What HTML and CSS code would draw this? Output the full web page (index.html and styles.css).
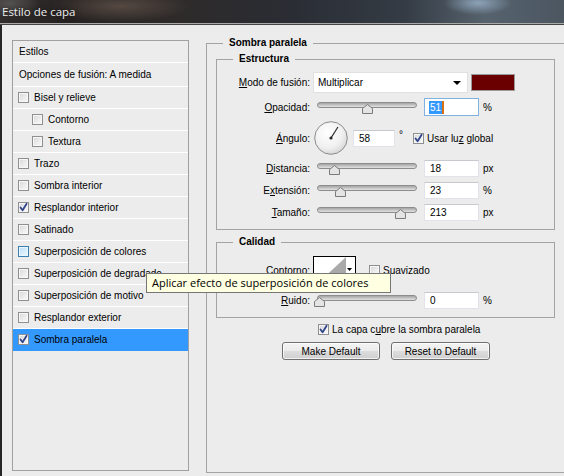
FILE: index.html
```html
<!DOCTYPE html>
<html lang="es">
<head>
<meta charset="utf-8">
<title>Estilo de capa</title>
<link rel="stylesheet" href="styles.css">
</head>
<body>
<div class="titlebar"><span class="title">Estilo de capa</span></div>
<div class="window">
  <div class="styles-list">
    <div class="row head first">Estilos</div>
    <div class="row head second">Opciones de fusión: A medida</div>
    <div class="row"><span class="cb"></span>Bisel y relieve</div>
    <div class="row sub"><span class="cb"></span>Contorno</div>
    <div class="row sub"><span class="cb"></span>Textura</div>
    <div class="row"><span class="cb"></span>Trazo</div>
    <div class="row"><span class="cb"></span>Sombra interior</div>
    <div class="row"><span class="cb checked"><svg viewBox="0 0 11 11"><path d="M2.5 5.5 L4.6 8.3 L8.6 1.8" /></svg></span>Resplandor interior</div>
    <div class="row"><span class="cb"></span>Satinado</div>
    <div class="row"><span class="cb hover"></span>Superposición de colores</div>
    <div class="row"><span class="cb"></span>Superposición de degradado</div>
    <div class="row"><span class="cb"></span>Superposición de motivo</div>
    <div class="row"><span class="cb"></span>Resplandor exterior</div>
    <div class="row selected"><span class="cb checked"><svg viewBox="0 0 11 11"><path d="M2.5 5.5 L4.6 8.3 L8.6 1.8" /></svg></span>Sombra paralela</div>
  </div>

  <section class="outer">
    <div class="outer-head"><span class="seg"></span><h2 class="outer-title">Sombra paralela</h2><span class="line"></span></div>
    <div class="outer-body">

    <fieldset class="group estructura">
      <legend>Estructura</legend>
      <div class="form">
        <div class="frow h21">
          <span class="lbl"><u>M</u>odo de fusión:</span>
          <div class="select">Multiplicar<span class="arrow"></span></div>
          <span class="swatch"></span>
        </div>
        <div class="frow h18">
          <span class="lbl"><u>O</u>pacidad:</span>
          <div class="slider"><div class="track"></div><svg class="thumb" style="left:45px" viewBox="0 0 11 10"><polygon points="0.5,4.5 5.5,0.5 10.5,4.5 10.5,9.5 0.5,9.5"/></svg></div>
          <div class="textbox focus"><span class="selt">51</span><span class="caret"></span></div>
          <span class="unit">%</span>
        </div>
        <div class="frow h34">
          <span class="lbl"><u>Á</u>ngulo:</span>
          <svg class="dial" viewBox="0 0 34 34">
            <defs>
              <radialGradient id="dg" cx="40%" cy="35%" r="75%">
                <stop offset="0" stop-color="#ffffff"/>
                <stop offset="0.6" stop-color="#f0f0f0"/>
                <stop offset="1" stop-color="#cfcfcf"/>
              </radialGradient>
            </defs>
            <circle cx="17" cy="17" r="16.3" fill="url(#dg)" stroke="#8c8c8c" stroke-width="1"/>
            <line x1="17" y1="17" x2="23.9" y2="6" stroke="#2b2b2b" stroke-width="1.2"/>
            <circle cx="17" cy="17" r="1.6" fill="#2b2b2b"/>
          </svg>
          <div class="textbox short">58</div>
          <span class="deg">°</span>
          <span class="cb checked ml"><svg viewBox="0 0 11 11"><path d="M2.5 5.5 L4.6 8.3 L8.6 1.8" /></svg></span><span class="cbtext">Usar lu<u>z</u> global</span>
        </div>
        <div class="frow h17">
          <span class="lbl"><u>D</u>istancia:</span>
          <div class="slider"><div class="track"></div><svg class="thumb" style="left:12px" viewBox="0 0 11 10"><polygon points="0.5,4.5 5.5,0.5 10.5,4.5 10.5,9.5 0.5,9.5"/></svg></div>
          <div class="textbox">18</div>
          <span class="unit">px</span>
        </div>
        <div class="frow h17">
          <span class="lbl">E<u>x</u>tensión:</span>
          <div class="slider"><div class="track"></div><svg class="thumb" style="left:18px" viewBox="0 0 11 10"><polygon points="0.5,4.5 5.5,0.5 10.5,4.5 10.5,9.5 0.5,9.5"/></svg></div>
          <div class="textbox">23</div>
          <span class="unit">%</span>
        </div>
        <div class="frow h17">
          <span class="lbl"><u>T</u>amaño:</span>
          <div class="slider"><div class="track"></div><svg class="thumb" style="left:78px" viewBox="0 0 11 10"><polygon points="0.5,4.5 5.5,0.5 10.5,4.5 10.5,9.5 0.5,9.5"/></svg></div>
          <div class="textbox">213</div>
          <span class="unit">px</span>
        </div>
      </div>
    </fieldset>

    <fieldset class="group calidad">
      <legend>Calidad</legend>
      <div class="form q">
        <div class="frow h28">
          <span class="lbl">Contorno:</span>
          <svg class="contour" viewBox="0 0 43 28">
            <rect x="0.5" y="0.5" width="42" height="27" fill="#ffffff" stroke="#000000"/>
            <polygon points="5,27 33,1 33,27" fill="#a9a9a9"/>
            <polygon points="34,12 39,12 36.5,15" fill="#000000"/>
          </svg>
          <span class="cb ml2"></span><span class="cbtext"><u>S</u>uavizado</span>
        </div>
        <div class="frow h17">
          <span class="lbl"><u>R</u>uido:</span>
          <div class="slider"><div class="track"></div><svg class="thumb" style="left:-3px" viewBox="0 0 11 10"><polygon points="0.5,4.5 5.5,0.5 10.5,4.5 10.5,9.5 0.5,9.5"/></svg></div>
          <div class="textbox">0</div>
          <span class="unit">%</span>
        </div>
      </div>
    </fieldset>

    <div class="cover-row">
      <span class="cb checked"><svg viewBox="0 0 11 11"><path d="M2.5 5.5 L4.6 8.3 L8.6 1.8" /></svg></span><span class="cbtext">La capa c<u>u</u>bre la sombra paralela</span>
    </div>
    <div class="buttons">
      <div class="btn w1">Make Default</div>
      <div class="btn w2">Reset to Default</div>
    </div>
    </div>
  </section>
</div>

<div class="tooltip">Aplicar efecto de superposición de colores</div>
</body>
</html>
```

FILE: styles.css
```css
html, body {
  margin: 0;
  padding: 0;
}
body {
  width: 564px;
  height: 476px;
  overflow: hidden;
  position: relative;
  background: #ececec;
  font-family: "Liberation Sans", Arial, sans-serif;
  font-size: 10px;
  color: #000;
}

/* ---------- title bar ---------- */
.titlebar {
  height: 23px;
  border-bottom: 1px solid #a9a9a9;
  box-shadow: 0 1px 0 #454545;
  background:
    radial-gradient(ellipse 34px 12px at 478px 3px, rgba(160,185,210,0.75), rgba(160,185,210,0) 100%),
    radial-gradient(ellipse 70px 16px at 120px 6px, rgba(120,100,88,0.55), rgba(120,100,88,0) 100%),
    radial-gradient(ellipse 30px 14px at 10px 4px, rgba(110,110,110,0.6), rgba(110,110,110,0) 100%),
    linear-gradient(90deg, #34302e 0%, #272322 12%, #2e2a29 30%, #2a2d34 52%, #353c45 72%, #56626d 86%, #4b5661 100%);
  display: flex;
  align-items: center;
}
.title {
  font-family: "Open Sans", "Noto Sans", sans-serif;
  font-size: 11.5px;
  color: #ececec;
  padding-left: 2px;
  text-shadow: 0 0 6px rgba(0,0,0,0.6);
}

/* ---------- window body ---------- */
.window {
  margin-top: 1px;
  height: 451px;
  border-left: 2px solid #262626;
  padding-left: 10px;
  display: flex;
  align-items: flex-start;
}

/* ---------- styles list ---------- */
.styles-list {
  box-sizing: border-box;
  width: 177px;
  height: 431px;
  margin-top: 15px;
  border: 1px solid #a0a0a0;
  background: #ececec;
  flex: none;
}
.row {
  box-sizing: border-box;
  height: 22px;
  border-bottom: 1px solid #ffffff;
  display: flex;
  align-items: center;
  padding-left: 5px;
  white-space: nowrap;
}
.row.head { padding-left: 6px; }
.row.second { height: 24px; }
.row.sub { padding-left: 19px; }
.row.selected {
  background: #3399ff;
  border-bottom-color: transparent;
}
.row .cb { margin-right: 5px; }

/* ---------- checkbox ---------- */
.cb {
  box-sizing: border-box;
  width: 11px;
  height: 11px;
  flex: none;
  border: 1px solid #8e8f8f;
  background: linear-gradient(135deg, #d6d6d6 0%, #ececec 55%, #fafafa 100%);
  box-shadow: inset 0 0 0 1px #f7f7f7;
  display: inline-flex;
  align-items: center;
  justify-content: center;
}
.cb.hover {
  border-color: #3c7fb1;
  background: linear-gradient(135deg, #b9def6 0%, #d8eefb 55%, #eef8fe 100%);
  box-shadow: inset 0 0 0 1px #e9f6fe;
}
.cb svg {
  width: 11px;
  height: 11px;
  flex: none;
}
.cb svg path {
  fill: none;
  stroke: #30458c;
  stroke-width: 1.8;
  stroke-linecap: round;
  stroke-linejoin: round;
}
.cbtext { margin-left: 3px; white-space: nowrap; }

/* ---------- outer group (open on the right, runs past the frame) ---------- */
.outer {
  flex: none;
  width: 420px;
  margin-left: 17px;
  margin-top: 11px;
}
.outer-head {
  display: flex;
  height: 14px;
}
.outer-head .seg {
  align-self: flex-end;
  width: 17px;
  height: 7px;
  border-top: 1px solid #a3a3a3;
  border-left: 1px solid #a3a3a3;
  box-sizing: border-box;
}
.outer-head .line {
  align-self: flex-end;
  flex: 1;
  height: 7px;
  border-top: 1px solid #a3a3a3;
  box-sizing: border-box;
}
.outer-title {
  margin: 0;
  padding: 0 6px;
  line-height: 14px;
  font-size: 10px;
  font-weight: bold;
}
.outer-body {
  border-left: 1px solid #a3a3a3;
  border-bottom: 1px solid #a3a3a3;
  padding: 2px 0 112px 9px;
}

/* ---------- fieldsets ---------- */
fieldset.group {
  margin: 0;
  padding: 0;
  min-width: 0;
  border: 1px solid #a3a3a3;
  box-sizing: border-box;
}
fieldset.group > legend {
  margin-left: 16px;
  padding: 0 6px;
  height: 14px;
  line-height: 14px;
  font-weight: bold;
  font-size: 10px;
}
fieldset.estructura {
  width: 339px;
}
fieldset.calidad {
  width: 339px;
  margin-top: 5px;
}
.form {
  display: flex;
  flex-direction: column;
  gap: 5px;
  padding: 6px 0 8px 0;
}
.form.q {
  gap: 8px;
  padding: 7px 0 8px 0;
}
.frow {
  display: flex;
  align-items: center;
  white-space: nowrap;
}
.h21 { height: 21px; }
.h18 { height: 18px; }
.h17 { height: 17px; }
.h34 { height: 34px; }
.h28 { height: 28px; }
.lbl {
  width: 93px;
  text-align: right;
  margin-right: 3px;
  flex: none;
}

/* select */
.select {
  box-sizing: border-box;
  width: 155px;
  height: 21px;
  background: #fff;
  border: 1px solid #e1e1e1;
  display: flex;
  align-items: center;
  padding-left: 4px;
}
.select .arrow {
  margin-left: auto;
  margin-right: 6px;
  width: 0;
  height: 0;
  border-left: 4px solid transparent;
  border-right: 4px solid transparent;
  border-top: 4px solid #000;
}
.swatch {
  box-sizing: border-box;
  width: 44px;
  height: 17px;
  margin-left: 3px;
  border: 1px solid #9a9a9a;
  background: #6a0000;
}

/* slider */
.slider {
  position: relative;
  width: 100px;
  height: 17px;
  margin-left: 4px;
  flex: none;
}
.track {
  box-sizing: border-box;
  margin-top: 3px;
  height: 6px;
  border: 1px solid #8d8d8d;
  border-radius: 3px;
  background: linear-gradient(#a5a5a5, #cacaca 60%, #e2e2e2);
}
.thumb {
  position: absolute;
  top: 5px;
  width: 11px;
  height: 10px;
}
.thumb polygon {
  fill: #e4e4e4;
  stroke: #7b7b7b;
  stroke-width: 1;
}

/* text boxes */
.textbox {
  box-sizing: border-box;
  width: 55px;
  height: 17px;
  margin-left: 7px;
  background: #fff;
  border: 1px solid #e2e3ea;
  border-top-color: #c8c9cf;
  padding-left: 5px;
  display: flex;
  align-items: center;
  flex: none;
}
.h18 .textbox { height: 18px; }
.textbox.focus {
  border-color: #7fb2e0;
  padding-left: 4px;
}
.textbox.short {
  width: 42px;
  margin-left: 5px;
}
.selt {
  background: #3399ff;
  color: #fff;
  padding: 0 1px;
  line-height: 13px;
}
.caret {
  width: 2px;
  height: 13px;
  background: #d8700f;
}
.unit { margin-left: 4px; }
.deg { margin-left: 4px; align-self: flex-start; margin-top: 8px; }
.cb.ml { margin-left: 10px; }
.cb.ml2 { margin-left: 13px; }

.dial {
  width: 34px;
  height: 34px;
  margin-left: 1px;
  flex: none;
}
.contour {
  width: 43px;
  height: 28px;
  flex: none;
}

/* bottom rows */
.cover-row {
  margin-top: 5px;
  height: 13px;
  padding-left: 102px;
  display: flex;
  align-items: center;
}
.buttons {
  margin-top: 6px;
  padding-left: 66px;
  display: flex;
  gap: 11px;
}
.btn {
  box-sizing: border-box;
  height: 18px;
  border: 1px solid #707070;
  border-radius: 3px;
  background: linear-gradient(#f4f4f4 0%, #ebebeb 50%, #dddddd 51%, #cfcfcf 100%);
  box-shadow: inset 0 0 0 1px rgba(255,255,255,0.7);
  display: flex;
  align-items: center;
  justify-content: center;
}
.btn.w1 { width: 98px; }
.btn.w2 { width: 99px; }

/* tooltip */
.tooltip {
  position: absolute;
  left: 146px;
  top: 273px;
  box-sizing: border-box;
  width: 245px;
  height: 20px;
  background: #ffffe1;
  border: 1px solid #767676;
  padding-left: 5px;
  font-family: "Open Sans", "Noto Sans", sans-serif;
  font-size: 11px;
  line-height: 18px;
  color: #000;
  white-space: nowrap;
  z-index: 5;
}
```
